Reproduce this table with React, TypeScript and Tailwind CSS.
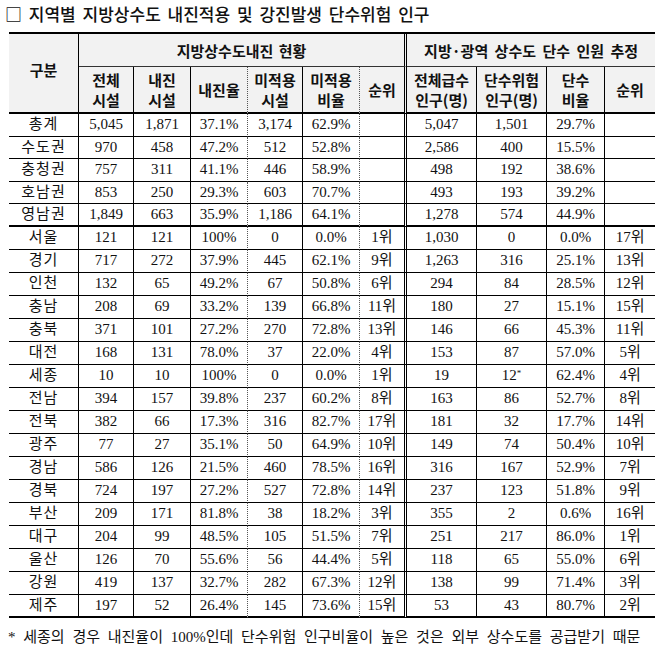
import React from "react";

type Row = [string, string, string, string, string, string, string, string, string, string, string];

const top: Row[] = [
  ["총계", "5,045", "1,871", "37.1%", "3,174", "62.9%", "", "5,047", "1,501", "29.7%", ""],
  ["수도권", "970", "458", "47.2%", "512", "52.8%", "", "2,586", "400", "15.5%", ""],
  ["충청권", "757", "311", "41.1%", "446", "58.9%", "", "498", "192", "38.6%", ""],
  ["호남권", "853", "250", "29.3%", "603", "70.7%", "", "493", "193", "39.2%", ""],
  ["영남권", "1,849", "663", "35.9%", "1,186", "64.1%", "", "1,278", "574", "44.9%", ""],
];

const bottom: Row[] = [
  ["서울", "121", "121", "100%", "0", "0.0%", "1위", "1,030", "0", "0.0%", "17위"],
  ["경기", "717", "272", "37.9%", "445", "62.1%", "9위", "1,263", "316", "25.1%", "13위"],
  ["인천", "132", "65", "49.2%", "67", "50.8%", "6위", "294", "84", "28.5%", "12위"],
  ["충남", "208", "69", "33.2%", "139", "66.8%", "11위", "180", "27", "15.1%", "15위"],
  ["충북", "371", "101", "27.2%", "270", "72.8%", "13위", "146", "66", "45.3%", "11위"],
  ["대전", "168", "131", "78.0%", "37", "22.0%", "4위", "153", "87", "57.0%", "5위"],
  ["세종", "10", "10", "100%", "0", "0.0%", "1위", "19", "12*", "62.4%", "4위"],
  ["전남", "394", "157", "39.8%", "237", "60.2%", "8위", "163", "86", "52.7%", "8위"],
  ["전북", "382", "66", "17.3%", "316", "82.7%", "17위", "181", "32", "17.7%", "14위"],
  ["광주", "77", "27", "35.1%", "50", "64.9%", "10위", "149", "74", "50.4%", "10위"],
  ["경남", "586", "126", "21.5%", "460", "78.5%", "16위", "316", "167", "52.9%", "7위"],
  ["경북", "724", "197", "27.2%", "527", "72.8%", "14위", "237", "123", "51.8%", "9위"],
  ["부산", "209", "171", "81.8%", "38", "18.2%", "3위", "355", "2", "0.6%", "16위"],
  ["대구", "204", "99", "48.5%", "105", "51.5%", "7위", "251", "217", "86.0%", "1위"],
  ["울산", "126", "70", "55.6%", "56", "44.4%", "5위", "118", "65", "55.0%", "6위"],
  ["강원", "419", "137", "32.7%", "282", "67.3%", "12위", "138", "99", "71.4%", "3위"],
  ["제주", "197", "52", "26.4%", "145", "73.6%", "15위", "53", "43", "80.7%", "2위"],
];

// right border style per column index (value columns)
const rightBorder = [
  "border-r border-r-black",
  "border-r border-r-black",
  "border-r border-r-[#555] [border-right-style:dotted]",
  "border-r border-r-black",
  "border-r border-r-[#555] [border-right-style:dotted]",
  "border-r-[3px] border-r-black [border-right-style:double]",
  "border-r border-r-black",
  "border-r border-r-black",
  "border-r border-r-black",
  "",
];

const serif = "font-['Liberation_Serif','Noto_Sans_CJK_KR',serif]";
const gothic = "font-['Noto_Sans_CJK_KR','Noto_Sans',sans-serif]";

function DataRows({ rows, h }: { rows: Row[]; h: string }) {
  return (
    <>
      {rows.map((r, i) => {
        const isLast = i === rows.length - 1;
        const bb = isLast ? "border-b-2 border-b-black" : "border-b border-b-black";
        return (
          <tr key={r[0]}>
            <td className={`${h} ${bb} border-r border-r-black p-0 text-center tracking-[1px]`}>{r[0]}</td>
            {r.slice(1).map((c, j) => (
              <td key={j} className={`${h} ${bb} ${rightBorder[j]} p-0 text-center`}>
                {c === "12*" ? (
                  <span>
                    12<span className="relative -top-[4px] text-[9px]">*</span>
                  </span>
                ) : (
                  c
                )}
              </td>
            ))}
          </tr>
        );
      })}
    </>
  );
}

export default function App() {
  const hd = "bg-[#f2f2f2] p-0 text-center font-bold";
  return (
    <div className={`w-[663px] h-[650px] bg-white text-[#111] ${serif}`}>
      <div className={`h-[32px] pl-[5px] pt-[3px] text-[17px] leading-[22px] font-medium [word-spacing:3px] ${gothic}`}>
        □ 지역별 지방상수도 내진적용 및 강진발생 단수위험 인구
      </div>
      <table className="ml-[9px] w-[646px] table-fixed border-separate border-spacing-0 border-t-2 border-t-black text-[15px] leading-none">
        <colgroup>
          <col className="w-[70px]" />
          <col className="w-[55px]" />
          <col className="w-[57px]" />
          <col className="w-[57px]" />
          <col className="w-[55px]" />
          <col className="w-[57px]" />
          <col className="w-[47px]" />
          <col className="w-[70px]" />
          <col className="w-[70px]" />
          <col className="w-[58px]" />
          <col className="w-[50px]" />
        </colgroup>
        <thead className={gothic}>
          <tr>
            <td rowSpan={2} className={`${hd} border-r border-r-black border-b-2 border-b-black pb-[8px]`}>
              구분
            </td>
            <td colSpan={6} className={`${hd} h-[33px] border-b border-b-[#333] border-r-[3px] border-r-black [border-right-style:double] [word-spacing:2px]`}>
              지방상수도내진 현황
            </td>
            <td colSpan={4} className={`${hd} h-[33px] border-b border-b-[#333] [word-spacing:3px]`}>
              지방·광역 상수도 단수 인원 추정
            </td>
          </tr>
          <tr className="leading-[20px]">
            {[
              "전체\n시설",
              "내진\n시설",
              "내진율",
              "미적용\n시설",
              "미적용\n비율",
              "순위",
              "전체급수\n인구(명)",
              "단수위험\n인구(명)",
              "단수\n비율",
              "순위",
            ].map((t, j) => (
              <td key={j} className={`${hd} h-[47px] border-b-2 border-b-black ${rightBorder[j]} whitespace-pre-line`}>
                {t}
              </td>
            ))}
          </tr>
        </thead>
        <tbody>
          <DataRows rows={top} h="h-[22.5px]" />
          <DataRows rows={bottom} h="h-[23px]" />
        </tbody>
      </table>
      <div className="pl-[8px] pt-[9px] text-[15px] leading-[20px] [word-spacing:4px]">
        * 세종의 경우 내진율이 100%인데 단수위험 인구비율이 높은 것은 외부 상수도를 공급받기 때문
      </div>
    </div>
  );
}
